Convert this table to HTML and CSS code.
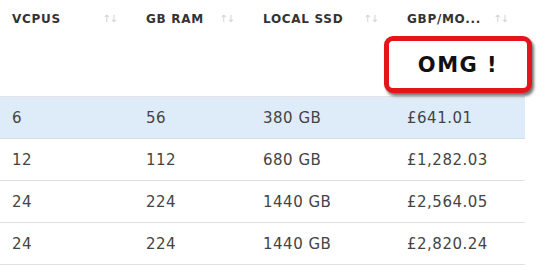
FILE: index.html
```html
<!DOCTYPE html>
<html>
<head>
<meta charset="utf-8">
<link rel="stylesheet" href="styles.css">
</head>
<body>
<div class="table">
  <div class="head">
    <div class="hcell"><span class="label">VCPUS</span><span class="sort">↑↓</span></div>
    <div class="hcell"><span class="label">GB RAM</span><span class="sort">↑↓</span></div>
    <div class="hcell"><span class="label">LOCAL SSD</span><span class="sort">↑↓</span></div>
    <div class="hcell"><span class="label">GBP/MO...</span><span class="sort">↑↓</span></div>
    <div class="callout">OMG !</div>
  </div>
  <div class="row selected"><div>6</div><div>56</div><div>380 GB</div><div>£641.01</div></div>
  <div class="row"><div>12</div><div>112</div><div>680 GB</div><div>£1,282.03</div></div>
  <div class="row"><div>24</div><div>224</div><div>1440 GB</div><div>£2,564.05</div></div>
  <div class="row"><div>24</div><div>224</div><div>1440 GB</div><div>£2,820.24</div></div>
</div>
</body>
</html>
```

FILE: styles.css
```css
html, body {
  margin: 0;
  padding: 0;
  background: #ffffff;
}
.table {
  width: 525px;
  font-family: "DejaVu Sans", "Open Sans", sans-serif;
}
.head, .row {
  display: grid;
  grid-template-columns: 134px 117px 144px 130px;
}
.head {
  position: relative;
  height: 96px;
  border-bottom: 1px solid #e3e3e3;
}
.hcell {
  display: flex;
  align-items: center;
  height: 37px;
  padding-left: 12px;
}
.label {
  font-size: 12px;
  font-weight: bold;
  letter-spacing: 0.7px;
  color: #333333;
}
.sort {
  margin-left: auto;
  margin-right: 17px;
  font-size: 10px;
  color: #cfcfcf;
  letter-spacing: -1px;
}
.callout {
  position: absolute;
  left: 384px;
  top: 36px;
  width: 138px;
  height: 47px;
  border: 5px solid #e3141c;
  border-radius: 9px;
  background: #ffffff;
  box-shadow: 2px 3px 3px rgba(0, 0, 0, 0.55);
  display: flex;
  align-items: center;
  justify-content: center;
  font-size: 21px;
  font-weight: bold;
  letter-spacing: 1.5px;
  color: #111111;
}
.row {
  height: 41px;
  align-items: center;
  border-bottom: 1px solid #e1e1e1;
  font-size: 15px;
  letter-spacing: 0.5px;
  color: #444444;
}
.row > div {
  padding-left: 12px;
}
.row.selected {
  background: #deecf9;
  border-bottom-color: #d2dde8;
}
```
